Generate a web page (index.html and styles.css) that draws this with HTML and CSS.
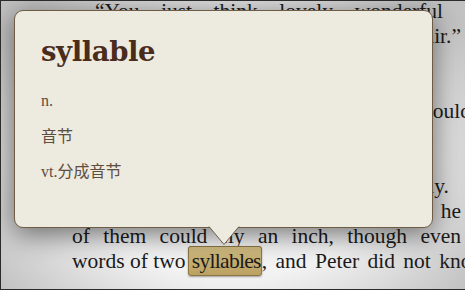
FILE: index.html
```html
<!DOCTYPE html>
<html>
<head>
<meta charset="utf-8">
<link rel="stylesheet" href="styles.css">
</head>
<body>
<div class="page">
  <div class="text">
    <div class="line j ind">“You just think lovely wonderful</div>
    <div class="line j">lift you up in the air.”</div>
    <div class="line">He showed them again.</div>
    <div class="line">“You’re so nippy at it,” John said,</div>
    <div class="line r cut">he said that he could</div>
    <div class="line">once?”</div>
    <div class="line">Peter did it both slowly and</div>
    <div class="line r endy">very, very quickly.</div>
    <div class="line j">cried John, but soon he</div>
    <div class="line j">of them could fly an inch, though even</div>
    <div class="line">words of two <span class="hl">syllables</span><span class="tail">, and Peter did not know A from Z.</span></div>
  </div>

  <div class="popup">
    <h1 class="word">syllable</h1>
    <div class="pos">n.</div>
    <div class="def">音节</div>
    <div class="def"><span class="pos-inline">vt.</span>分成音节</div>
    <svg class="arrow" width="34" height="20" viewBox="0 0 34 20">
      <path d="M1 0.5 L16 18.5 L31 0.5 Z" fill="#edeadf"/>
      <path d="M1 0.5 L16 18.5 L31 0.5" fill="none" stroke="#6e5d44" stroke-width="1"/>
    </svg>
  </div>
</div>
</body>
</html>
```

FILE: styles.css
```css
html, body {
  margin: 0;
  padding: 0;
}

body {
  width: 465px;
  height: 290px;
  overflow: hidden;
  background: #f2f2f2;
}

.page {
  position: relative;
  width: 465px;
  height: 290px;
  box-sizing: border-box;
  border-left: 1px solid #2b2b2b;
  border-top: 1px solid #2b2b2b;
  border-bottom: 1px solid #2b2b2b;
  overflow: hidden;
  background: radial-gradient(ellipse 62% 75% at 50% 55%, #fbfbfb 0%, #f2f2f2 55%, #c2c2c2 100%);
}

.text {
  margin-top: -2px;
  padding-left: 71px;
  width: 389px;
  font-family: "Liberation Serif", "Times New Roman", serif;
  font-size: 21.5px;
  color: #1b1b1b;
}

.line {
  height: 25px;
  line-height: 25px;
  white-space: nowrap;
}

.j {
  white-space: normal;
  text-align: justify;
  text-align-last: justify;
}

.ind {
  padding-left: 23px;
  padding-right: 18px;
}

.r {
  text-align: right;
}

.cut {
  margin-right: -10px;
}

.endy {
  padding-right: 12px;
}

.hl {
  padding: 2px 0 2px 3px;
  margin-left: -3px;
  letter-spacing: -0.7px;
  border: 1px solid #8c7646;
  border-radius: 3px;
  background: linear-gradient(#d2bd82, #bba161);
  box-shadow: 0 1px 2px rgba(0, 0, 0, 0.35);
}

.tail {
  word-spacing: 3px;
}

.popup {
  position: absolute;
  left: 13px;
  top: 9px;
  width: 419px;
  height: 218px;
  box-sizing: border-box;
  padding: 23px 0 0 26px;
  background: #edeadf;
  border: 1px solid #6e5d44;
  border-radius: 9px;
  box-shadow: 0 6px 28px rgba(0, 0, 0, 0.55);
}

.word {
  margin: 0 0 25px 0;
  font-family: "DejaVu Serif", serif;
  font-weight: bold;
  font-size: 27.5px;
  line-height: 34px;
  color: #4a2c1c;
  letter-spacing: -0.4px;
}

.pos {
  font-family: "Liberation Serif", serif;
  font-size: 16px;
  line-height: 16px;
  color: #5d4b3c;
  margin-bottom: 16px;
}

.def {
  font-family: "Noto Sans CJK SC", sans-serif;
  font-size: 16px;
  line-height: 20px;
  color: #5e4e40;
  margin-bottom: 15px;
}

.pos-inline {
  font-family: "Liberation Serif", serif;
  font-size: 16px;
}

.arrow {
  position: absolute;
  left: 193px;
  top: 100%;
  margin-top: -1px;
  display: block;
}
```
